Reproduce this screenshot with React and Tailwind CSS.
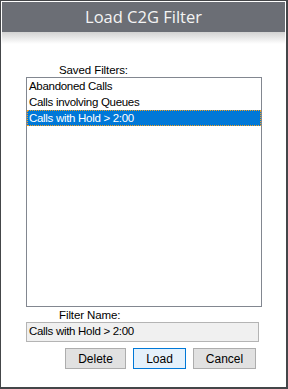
export default function App() {
  const items = ["Abandoned Calls", "Calls involving Queues", "Calls with Hold > 2:00"];
  const f = { fontFamily: '"Liberation Sans", Arial, sans-serif' };
  return (
    <div className="w-[288px] h-[389px] bg-[#444649] pt-[1px] pl-[1px] overflow-hidden">
      <div className="w-[285px] h-[386px] border border-white bg-white flex flex-col" style={f}>
        <div className="h-[30px] bg-[#6b6e75] flex items-center justify-center text-[#f4f4f4] text-[16.5px]" style={{ fontFamily: '"Open Sans", sans-serif' }}>
          Load C2G Filter
        </div>
        <div className="h-[12px] bg-gradient-to-b from-[#d2d2d2] to-white" />
        <div className="mt-[19px] h-[14px] leading-[14px] pl-[57px] text-[11.5px] tracking-[-0.1px] text-black">Saved Filters:</div>
        <div className="ml-[24px] w-[236px] h-[230px] border border-[#828790] bg-white flex flex-col">
          {items.map((t, i) => (
            <div
              key={t}
              className={
                i === 2
                  ? "h-[16px] leading-[14px] pl-[1px] text-[11.5px] tracking-[-0.3px] text-white bg-[#0078d7] border border-dotted border-[#f7a01c]"
                  : "h-[16px] leading-[16px] pl-[2px] text-[11.5px] tracking-[-0.3px] text-black"
              }
            >
              {t}
            </div>
          ))}
        </div>
        <div className="mt-[1px] h-[14px] leading-[14px] pl-[57px] text-[11.5px] tracking-[-0.1px] text-black">Filter Name:</div>
        <div className="ml-[24px] w-[233px] h-[20px] border border-[#b4b4b4] bg-[#f0f0f0] flex items-center pl-[2px] text-[11.5px] tracking-[-0.3px] text-black">
          Calls with Hold &gt; 2:00
        </div>
        <div className="mt-[6px] flex pl-[63px] gap-[7px]">
          <button className="w-[61px] h-[21px] border border-[#adadad] bg-[#e1e1e1] text-[12px] text-black">Delete</button>
          <button className="w-[53px] h-[21px] border border-[#0078d7] bg-[#e5f1fb] text-[12px] text-black">Load</button>
          <button className="w-[63px] h-[21px] border border-[#adadad] bg-[#e1e1e1] text-[12px] text-black">Cancel</button>
        </div>
      </div>
    </div>
  );
}
